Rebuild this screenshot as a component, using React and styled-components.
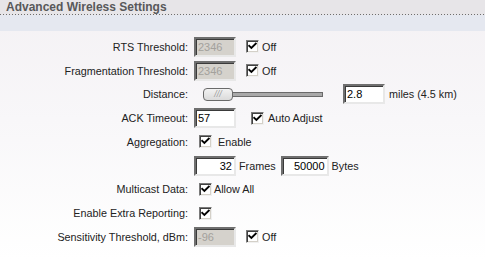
import React from 'react';
import styled, { createGlobalStyle } from 'styled-components';

const GlobalStyle = createGlobalStyle`
    html, body {
        margin: 0;
        padding: 0;
    }

    body {
        width: 485px;
        height: 260px;
        overflow: hidden;
        font-family: 'Liberation Sans', Arial, sans-serif;
        font-size: 10.8px;
        color: #222222;
        background: linear-gradient(#f4f1f4 0, #f8f7f9 120px, #ffffff 260px);
    }
`;

const Header = styled.div`
    height: 15px;
    padding-left: 6px;
    background-color: #e7e5e8;
    background-image: linear-gradient(to right, #6e6e6e 1px, transparent 1px);
    background-size: 3px 1px;
    background-repeat: repeat-x;
    background-position: 0 14px;
    display: flex;
    align-items: flex-start;
`;

const Title = styled.h2`
    margin: 0;
    padding-top: 1px;
    font-size: 12px;
    line-height: 13px;
    font-weight: bold;
    color: #58585a;
`;

const Band = styled.div`
    height: 16px;
    background: #e5e8f0;
`;

const Form = styled.div`
    padding-top: 4px;
`;

const Row = styled.div`
    height: 23.75px;
    display: flex;
    align-items: center;
`;

const Label = styled.div`
    width: 194px;
    box-sizing: border-box;
    padding-right: 6px;
    text-align: right;
    white-space: nowrap;
`;

const Controls = styled.div`
    display: flex;
    align-items: center;
`;

const TextInput = styled.input`
    width: ${(p) => p.$w || 42}px;
    height: 20px;
    box-sizing: border-box;
    margin: 0;
    padding: 0 2px;
    font-family: 'Liberation Sans', Arial, sans-serif;
    font-size: 11px;
    color: #000000;
    text-align: ${(p) => p.$align || 'left'};
    background: #ffffff;
    border: 2px solid;
    border-color: #6f6f6f #e8e8e8 #e8e8e8 #6f6f6f;
    box-shadow: inset 1px 1px 0 #3a3a3a;
    outline: none;

    &:disabled {
        background: #d5d2cc;
        color: #a3a19c;
    }
`;

const Unit = styled.span`
    margin-left: ${(p) => p.$ml || 3}px;
    white-space: nowrap;
`;

const CheckWrap = styled.label`
    display: flex;
    align-items: center;
    gap: ${(p) => p.$gap || 3}px;
    margin-left: ${(p) => p.$ml || 0}px;
`;

const Box = styled.span`
    width: 13px;
    height: 13px;
    box-sizing: border-box;
    background: #ffffff;
    border: 1px solid;
    border-color: #7a7a7a #f0f0f0 #f0f0f0 #7a7a7a;
    box-shadow: inset 1px 1px 0 #404040, inset -1px -1px 0 #d4d0c8;
    display: flex;
    align-items: center;
    justify-content: center;
`;

const Slider = styled.div`
    margin-left: 9px;
    width: 120px;
    height: 14px;
    display: flex;
    align-items: center;
`;

const Thumb = styled.div`
    width: 30px;
    height: 13px;
    box-sizing: border-box;
    border: 1px solid #6a6a6a;
    border-radius: 4px;
    background: linear-gradient(#f2f2f2, #dadada);
    display: flex;
    align-items: center;
    justify-content: center;
    font-size: 9px;
    font-style: italic;
    color: #9c9c9c;
    letter-spacing: 0;
`;

const Track = styled.div`
    flex: 1;
    height: 5px;
    box-sizing: border-box;
    border: 1px solid #6a6a6a;
    border-left: none;
    background: #a9a9a9;
`;

const Check = ({ label, gap, ml }) => (
    <CheckWrap $gap={gap} $ml={ml}>
        <Box>
            <svg width="9" height="9" viewBox="0 0 9 9">
                <path d="M1.2 3.8 L3.4 6 L7.8 1.6" fill="none" stroke="#000" strokeWidth="1.9" strokeLinecap="square" />
            </svg>
        </Box>
        {label && <span>{label}</span>}
    </CheckWrap>
);

const App = () => {
    return (
        <>
            <GlobalStyle />
            <Header>
                <Title>Advanced Wireless Settings</Title>
            </Header>
            <Band />
            <Form>
                <Row>
                    <Label>RTS Threshold:</Label>
                    <Controls>
                        <TextInput defaultValue="2346" disabled />
                        <Check label="Off" ml={10} />
                    </Controls>
                </Row>
                <Row>
                    <Label>Fragmentation Threshold:</Label>
                    <Controls>
                        <TextInput defaultValue="2346" disabled />
                        <Check label="Off" ml={10} />
                    </Controls>
                </Row>
                <Row>
                    <Label>Distance:</Label>
                    <Controls>
                        <Slider>
                            <Thumb>///</Thumb>
                            <Track />
                        </Slider>
                        <TextInput defaultValue="2.8" style={{ marginLeft: 20 }} />
                        <Unit $ml={4}>miles (4.5 km)</Unit>
                    </Controls>
                </Row>
                <Row>
                    <Label>ACK Timeout:</Label>
                    <Controls>
                        <TextInput defaultValue="57" />
                        <Check label="Auto Adjust" ml={15} gap={4} />
                    </Controls>
                </Row>
                <Row>
                    <Label>Aggregation:</Label>
                    <Controls>
                        <Check label="Enable" ml={5} gap={6} />
                    </Controls>
                </Row>
                <Row>
                    <Label />
                    <Controls>
                        <TextInput defaultValue="32" $align="right" />
                        <Unit>Frames</Unit>
                        <TextInput defaultValue="50000" $w={48} $align="right" style={{ marginLeft: 5 }} />
                        <Unit>Bytes</Unit>
                    </Controls>
                </Row>
                <Row>
                    <Label>Multicast Data:</Label>
                    <Controls>
                        <Check label="Allow All" ml={5} gap={2} />
                    </Controls>
                </Row>
                <Row>
                    <Label>Enable Extra Reporting:</Label>
                    <Controls>
                        <Check ml={5} />
                    </Controls>
                </Row>
                <Row>
                    <Label>Sensitivity Threshold, dBm:</Label>
                    <Controls>
                        <TextInput defaultValue="-96" disabled />
                        <Check label="Off" ml={10} />
                    </Controls>
                </Row>
            </Form>
        </>
    );
};

export default App;
